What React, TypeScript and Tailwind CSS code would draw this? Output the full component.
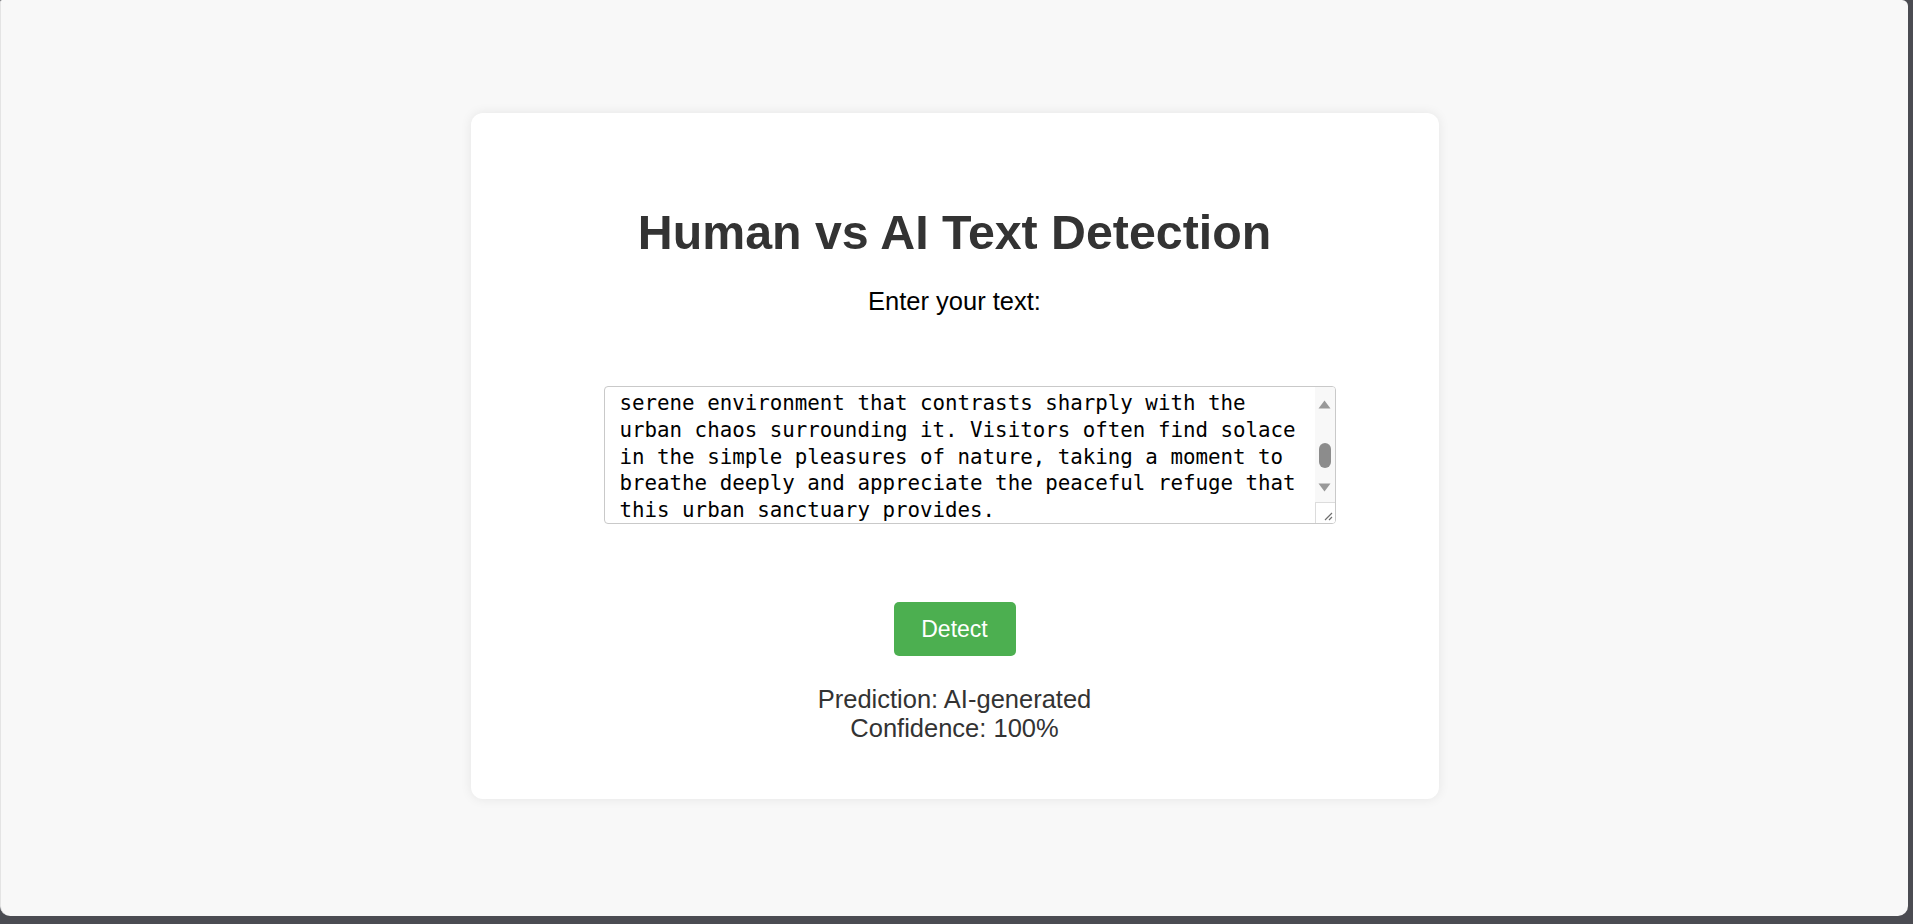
import React, { useEffect, useRef } from 'react';

const SAMPLE_TEXT =
  'In the heart of the bustling city lies a small park, a\n' +
  'quiet green oasis where old trees sway in the breeze,\n' +
  'trees sway gently in the breeze, creating a\n' +
  'serene environment that contrasts sharply with the urban chaos surrounding it. Visitors often find solace in the simple pleasures of nature, taking a moment to breathe deeply and appreciate the peaceful refuge that this urban sanctuary provides.';

const ScrollBar = () => (
    <div className="flex flex-col w-[20px] h-full bg-[#f8f8f8]">
        {/* up arrow */}
        <div className="h-[34px] flex items-center justify-center">
            <svg width="13" height="9" viewBox="0 0 13 9">
                <path d="M6.5 0.5L12.5 8.5H0.5Z" fill="#999999" />
            </svg>
        </div>
        {/* thumb */}
        <div className="mt-[22px] h-[25px] w-[12px] self-center rounded-full bg-[#8c8c8c]" />
        {/* down arrow */}
        <div className="mt-[12px] h-[14px] flex items-center justify-center">
            <svg width="13" height="9" viewBox="0 0 13 9">
                <path d="M0.5 0.5H12.5L6.5 8.5Z" fill="#999999" />
            </svg>
        </div>
        <div className="flex-1" />
        {/* resize corner */}
        <div className="h-[21px] border-t border-l border-[#dcdcdc] bg-white flex items-end justify-end pr-[2px] pb-[2px]">
            <svg width="10" height="10" viewBox="0 0 10 10">
                <path d="M9 2L2 9M9 6L6 9" stroke="#6e6e6e" strokeWidth="1.2" />
            </svg>
        </div>
    </div>
);

const App = () => {
    const areaRef = useRef<HTMLTextAreaElement>(null);

    useEffect(() => {
        const el = areaRef.current;
        if (el) el.scrollTop = el.scrollHeight - el.clientHeight - 1;
    }, []);

    return (
        <div className="h-screen w-full bg-[#4b4c52] pr-[5px] pb-[8px]">
            <div className="h-full bg-[#f8f8f8] rounded-tl-[2px] rounded-tr-[6px] rounded-b-[10px] border-l border-[#e4e4e4] flex items-start justify-center pt-[113px] font-['Liberation_Sans',Arial,sans-serif]">
                {/* Card */}
                <div className="w-[968px] bg-white rounded-[12px] shadow-[0_0_12px_rgba(0,0,0,0.08)] pt-[92px] pb-[56px] flex flex-col items-center">
                    <h1 className="text-[48.3px] leading-[55px] font-bold text-[#333333]">
                        Human vs AI Text Detection
                    </h1>
                    <label className="mt-[27px] text-[25.5px] leading-[29px] text-black">
                        Enter your text:
                    </label>

                    {/* Text box with its scrollbar */}
                    <div className="mt-[70px] ml-[30px] w-[732px] h-[138px] border border-[#c9c9c9] rounded-[4px] flex overflow-hidden">
                        <textarea
                            ref={areaRef}
                            defaultValue={SAMPLE_TEXT}
                            className="flex-1 h-full resize-none outline-none overflow-hidden pl-[15px] pr-[14px] pt-[2px] pb-0 font-['DejaVu_Sans_Mono',monospace] text-[20.8px] leading-[26.9px] text-black"
                        />
                        <ScrollBar />
                    </div>

                    <button className="mt-[78px] w-[122px] h-[54px] rounded-[5px] bg-[#4caf50] text-white text-[23px]">
                        Detect
                    </button>

                    <div className="mt-[29px] text-[25.5px] leading-[29px] text-[#333333] text-center">
                        <p>Prediction: AI-generated</p>
                        <p>Confidence: 100%</p>
                    </div>
                </div>
            </div>
        </div>
    );
};

export default App;
